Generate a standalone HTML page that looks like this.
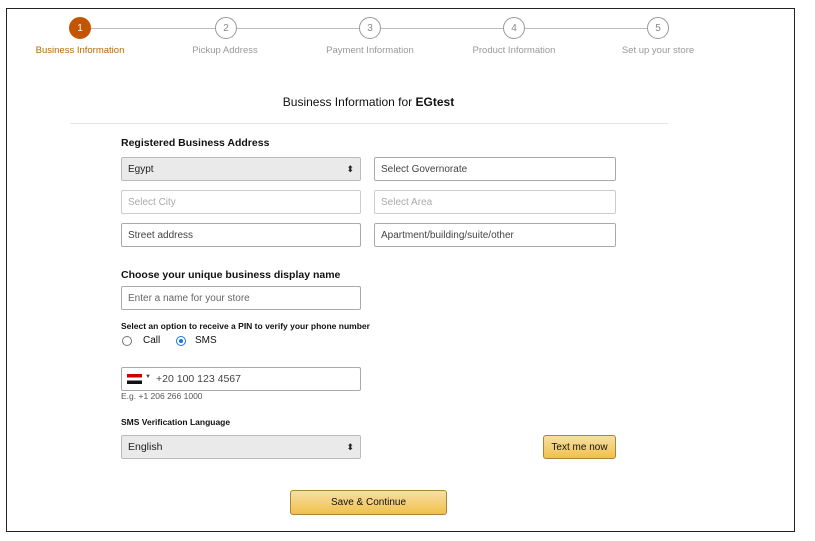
<!DOCTYPE html><html><head><style>
*{box-sizing:border-box;margin:0;padding:0}
body{width:815px;height:541px;background:#fff;font-family:"Liberation Sans",Arial,sans-serif;position:relative;overflow:hidden;color:#111}
.frame{position:absolute;left:6px;top:8px;width:789px;height:524px;border:1px solid #222}
.a{position:absolute}
.c{position:absolute;width:22px;height:22px;border-radius:50%;border:1px solid #999;background:#fff;font-size:10px;color:#888;display:flex;align-items:center;justify-content:center}
.lb{position:absolute;font-size:9.5px;color:#999;transform:translateX(-50%);white-space:nowrap;top:45px}
.in{position:absolute;height:24px;border:1px solid #aaa;border-radius:2px;font-size:10px;color:#444;padding-left:6px;display:flex;align-items:center;background:#fff}
.sel{background:#eaeaea;border-color:#bbb;color:#222}
.ph{color:#aaa;border-color:#ccc}
.arr{position:absolute;right:6px;top:6px;font-size:9px;color:#222}
.h{position:absolute;font-size:10.5px;font-weight:bold;color:#111}
.s{position:absolute;font-size:8.5px;font-weight:bold;color:#111}
.btn{position:absolute;border:1px solid #a88734;border-radius:3px;background:linear-gradient(#f7dfa5,#f0c14b);font-size:10px;color:#111;display:flex;align-items:center;justify-content:center}
</style></head><body>
<div class="frame"></div>
<div class="a" style="left:80px;top:28px;width:578px;height:1px;background:#bbb"></div>
<div class="c" style="left:69px;top:17px;background:#c45500;border-color:#c45500;color:#fff">1</div>
<div class="c" style="left:215px;top:17px">2</div>
<div class="c" style="left:359px;top:17px">3</div>
<div class="c" style="left:503px;top:17px">4</div>
<div class="c" style="left:647px;top:17px">5</div>
<div class="lb" style="left:80px;color:#b26a00">Business Information</div>
<div class="lb" style="left:225px">Pickup Address</div>
<div class="lb" style="left:370px">Payment Information</div>
<div class="lb" style="left:514px">Product Information</div>
<div class="lb" style="left:658px">Set up your store</div>
<div class="a" style="left:0;width:815px;top:95px;text-align:center;font-size:12px;padding-right:78px">Business Information for <b>EGtest</b></div>
<div class="a" style="left:70px;top:123px;width:598px;height:1px;background:#e4e4e4"></div>
<div class="h" style="left:121px;top:137px">Registered Business Address</div>
<div class="in sel" style="left:121px;top:157px;width:240px">Egypt<span class="arr">⬍</span></div>
<div class="in" style="left:374px;top:157px;width:242px">Select Governorate</div>
<div class="in ph" style="left:121px;top:190px;width:240px">Select City</div>
<div class="in ph" style="left:374px;top:190px;width:242px">Select Area</div>
<div class="in" style="left:121px;top:223px;width:240px">Street address</div>
<div class="in" style="left:374px;top:223px;width:242px">Apartment/building/suite/other</div>
<div class="h" style="left:121px;top:269px">Choose your unique business display name</div>
<div class="in" style="left:121px;top:286px;width:240px;color:#666">Enter a name for your store</div>
<div class="s" style="left:121px;top:321px">Select an option to receive a PIN to verify your phone number</div>
<div class="a" style="left:122px;top:336px;width:10px;height:10px;border:1px solid #777;border-radius:50%"></div>
<div class="a" style="left:143px;top:335px;font-size:10px">Call</div>
<div class="a" style="left:176px;top:336px;width:10px;height:10px;border:1px solid #1a73e8;border-radius:50%"><div style="margin:2px;width:4px;height:4px;border-radius:50%;background:#1a73e8"></div></div>
<div class="a" style="left:195px;top:335px;font-size:10px">SMS</div>
<div class="in" style="left:121px;top:367px;width:240px;padding-left:34px;font-size:10.5px">+20 100 123 4567</div>
<div class="a" style="left:127px;top:374px;width:15px;height:10px;background:linear-gradient(#c00 33%,#fff 33%,#fff 66%,#111 66%)"></div>
<div class="a" style="left:145px;top:374px;font-size:6px;color:#444">▼</div>
<div class="a" style="left:121px;top:391px;font-size:8.5px;color:#555">E.g. +1 206 266 1000</div>
<div class="s" style="left:121px;top:417px">SMS Verification Language</div>
<div class="in sel" style="left:121px;top:435px;width:240px;font-size:10.5px">English<span class="arr">⬍</span></div>
<div class="btn" style="left:543px;top:435px;width:73px;height:24px">Text me now</div>
<div class="btn" style="left:290px;top:490px;width:157px;height:25px">Save &amp; Continue</div>
</body></html>
